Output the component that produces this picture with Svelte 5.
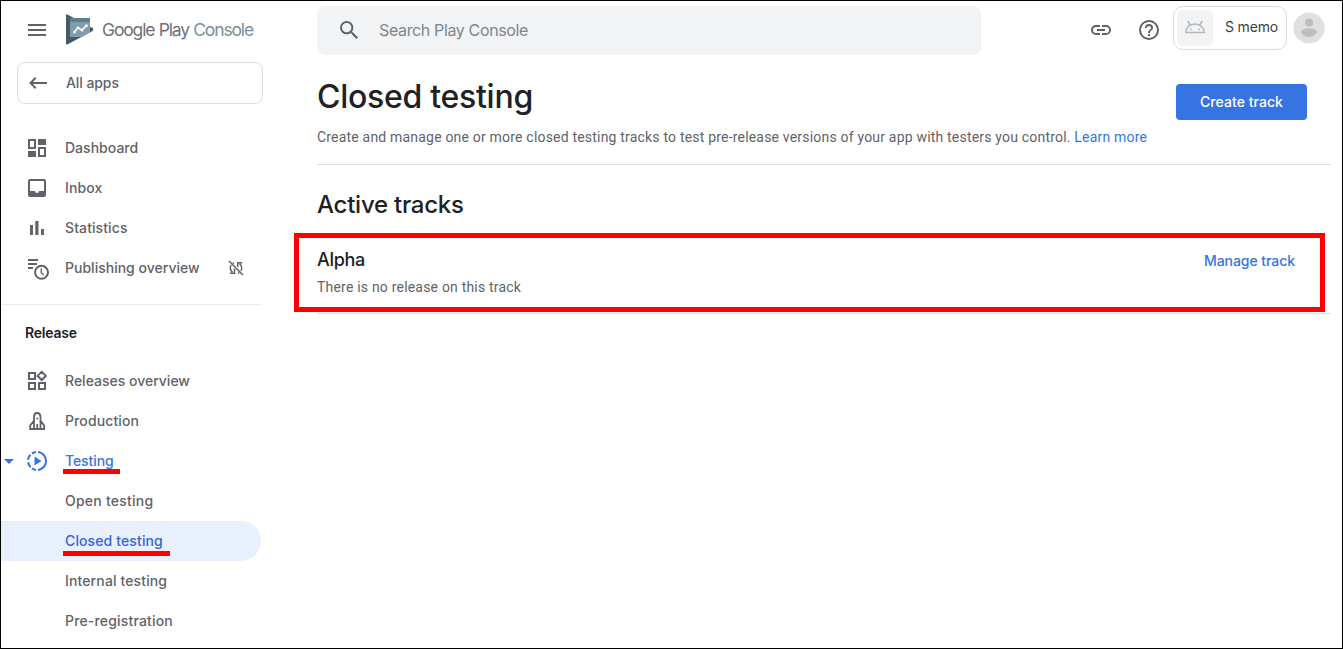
<script>
  const mainNav = [
    { label: 'Dashboard', icon: 'dashboard', ls: 0.02 },
    { label: 'Inbox', icon: 'inbox', ls: 0.12 },
    { label: 'Statistics', icon: 'stats', ls: 0.1 },
    { label: 'Publishing overview', icon: 'publish', ls: 0.01, off: true }
  ];
  const releaseNav = [
    { label: 'Releases overview', icon: 'releases', ls: 0 },
    { label: 'Production', icon: 'rocket', ls: 0.12 },
    { label: 'Testing', icon: 'testing', ls: -0.08, open: true, marked: true },
    { label: 'Open testing', ls: 0.24 },
    { label: 'Closed testing', ls: 0.12, active: true, marked: true },
    { label: 'Internal testing', ls: 0.13 },
    { label: 'Pre-registration', ls: 0.17 }
  ];
</script>

{#snippet glyph(name)}
  <svg class="glyph" viewBox="0 0 24 24" width="24" height="24" fill="none" stroke="currentColor" stroke-width="2">
    {#if name === 'dashboard'}
      <path d="M4 4h4v8H4zM14 12h6v8h-6z" stroke="none" />
      <path d="M4 4h6v8H4zM14 12h6v8h-6z" />
      <path d="M13 3h8v6h-8zM3 15h8v6H3z" fill="currentColor" stroke="none" />
    {:else if name === 'inbox'}
      <path d="M19 3H5a2 2 0 0 0-2 2v14c0 1.100.9 2 2 2h14a2 2 0 0 0 2-2V5a2 2 0 0 0-2-2zm0 12h-5c0 1.100-.9 2-2 2s-2-.9-2-2H5V5h14z" fill="currentColor" stroke="none" />
    {:else if name === 'stats'}
      <path d="M5 9h3v10H5zM10.300 5h3.200v14h-3.200zM16 13h3v6h-3z" fill="currentColor" stroke="none" />
    {:else if name === 'publish'}
      <path d="M3 4h10M3 8h9M3 12h5" stroke-width="1.800" />
      <circle cx="16.500" cy="16.300" r="6.500" />
      <path d="M16.200 12.300v4.500l2.800 2.200" stroke-width="1.300" />
    {:else if name === 'releases'}
      <path d="M4 4h6v6H4zM4 14h6v6H4zM14 14h6v6h-6zM16.700 2.800l4.100 4.100-4.100 4.100-4.100-4.100z" />
    {:else if name === 'rocket'}
      <path d="M9 20V8.500C9 5.500 10.500 4 12.200 4s3.300 1.500 3.300 4.500V20M9 11.500L5.200 16.500V20h13.900v-3.500l-3.600-5M12.200 15v5" stroke-width="1.800" />
      <circle cx="12.200" cy="9.500" r="1" fill="currentColor" stroke="none" />
    {:else if name === 'testing'}
      <path d="M13 3.050a9 9 0 0 1 0 17.900M11 3.050a9 9 0 0 0-4 1.500M5.500 5.800a9 9 0 0 0-2.400 5M3.100 13.200a9 9 0 0 0 2.400 5M7 19.450a9 9 0 0 0 4 1.500" />
      <path d="M9.500 7.500v9l7-4.500z" fill="currentColor" stroke="none" />
    {/if}
  </svg>
{/snippet}

{#snippet row(item)}
  <li class:active={item.active} class:open={item.open}>
    <span class="caret">{#if item.open}<svg width="10" height="5" viewBox="0 0 10 5"><path d="M0 0h10L5 5z" fill="currentColor" /></svg>{/if}</span>
    <span class="icon">{#if item.icon}{@render glyph(item.icon)}{/if}</span>
    <span class="label" class:marked={item.marked} style="letter-spacing:{item.ls}px">{item.label}</span>
    {#if item.off}
      <svg class="off" width="18" height="18" viewBox="0 0 18 18" fill="none" stroke="currentColor" stroke-width="1.500">
        <path d="M2 2l14 14" />
        <path d="M7 3.800L5.800 4.300M4 6c-1.300 2.500-.8 5 1.400 7.200M3 14.200h4.500V9.500M11 14.200l1.200-.5M14 12c1.300-2.500.8-5-1.400-7.200M15.200 3.800H10.700V8" />
      </svg>
    {/if}
  </li>
{/snippet}

<div class="window">
  <aside>
    <div class="brand">
      <svg class="menu" width="18" height="12" viewBox="0 0 18 12" fill="#5f6368"><path d="M0 0h18v2H0zM0 5h18v2H0zM0 10h18v2H0z" /></svg>
      <svg class="logo" width="28" height="31" viewBox="0 0 28 31">
        <path d="M0 1.500Q0-.4 1.800.7L26.500 14q1.600 1.500 0 3L1.800 30.300Q0 31 0 29.300z" fill="#455a64" />
        <path d="M4 4h20v4H4z" fill="#607d8b" />
        <path d="M4 8h20v10.300L15.500 23H4z" fill="#819cab" />
        <path d="M8.500 18l3.300-4.300 4 2.500 4.700-4.700" fill="none" stroke="#fff" stroke-width="1.500" />
        <g fill="#fff"><circle cx="8.500" cy="18" r="1.500" /><circle cx="12" cy="13.800" r="1.400" /><circle cx="16" cy="16" r="1.400" /><circle cx="20.300" cy="11.700" r="1.500" /></g>
      </svg>
      <span class="wordmark"><b>Google Play</b> <i>Console</i></span>
    </div>
    <div class="all-apps">
      <svg width="18" height="12" viewBox="0 0 18 12" fill="none" stroke="#5f6368" stroke-width="2"><path d="M18 6H1.500M6.700.8L1.500 6l5.200 5.200" /></svg>
      <span>All apps</span>
    </div>
    <ul>
      {#each mainNav as item}{@render row(item)}{/each}
    </ul>
    <h3>Release</h3>
    <ul>
      {#each releaseNav as item}{@render row(item)}{/each}
    </ul>
  </aside>

  <main>
    <header>
      <div class="search">
        <svg width="18" height="18" viewBox="3 3 17.500 17.500" fill="#5f6368"><path d="M15.500 14h-.79l-.28-.27A6.470 6.470 0 0 0 16 9.500 6.500 6.500 0 1 0 9.500 16c1.610 0 3.090-.59 4.230-1.570l.27.28v.79l5 4.990L20.490 19zm-6 0C7.010 14 5 11.990 5 9.500S7.010 5 9.500 5 14 7.010 14 9.500 11.990 14 9.500 14z" /></svg>
        <span>Search Play Console</span>
      </div>
      <svg class="link" width="24" height="24" viewBox="0 0 24 24" fill="#5f6368"><path d="M3.900 12c0-1.710 1.390-3.100 3.100-3.100h4V7H7a5 5 0 0 0 0 10h4v-1.900H7c-1.710 0-3.100-1.390-3.100-3.100zM8 13h8v-2H8zm9-6h-4v1.900h4a3.100 3.100 0 0 1 0 6.200h-4V17h4a5 5 0 0 0 0-10z" /></svg>
      <svg class="help" width="24" height="24" viewBox="0 0 24 24" fill="#5f6368"><path d="M11 18h2v-2h-2zm1-16a10 10 0 1 0 0 20 10 10 0 0 0 0-20zm0 18c-4.410 0-8-3.590-8-8s3.590-8 8-8 8 3.590 8 8-3.590 8-8 8zm0-14a4 4 0 0 0-4 4h2c0-1.100.9-2 2-2s2 .9 2 2c0 2-3 1.750-3 5h2c0-2.250 3-2.500 3-5a4 4 0 0 0-4-4z" /></svg>
      <div class="app">
        <div class="thumb">
          <svg width="22" height="14" viewBox="0 0 22 14" fill="none" stroke="#b4b6b8" stroke-width="1.500">
            <path d="M1.800 12.600a9.200 8.600 0 0 1 18.400 0zM6.200 5L3.800 1M15.800 5l2.400-4" />
            <circle cx="6.800" cy="9.300" r=".9" fill="#b4b6b8" stroke="none" /><circle cx="15.200" cy="9.300" r=".9" fill="#b4b6b8" stroke="none" />
          </svg>
        </div>
        <span>S memo</span>
      </div>
      <svg class="avatar" width="32" height="32" viewBox="0 0 32 32"><circle cx="16" cy="16" r="15.600" fill="#e0e0e0" /><circle cx="16" cy="10.500" r="4" fill="#bdbdbd" /><path d="M8 20.500c0-3 5-4.200 8-4.200s8 1.200 8 4.200c-1.600 2.700-4.500 4.500-8 4.500s-6.400-1.800-8-4.500z" fill="#bdbdbd" /></svg>
    </header>

    <section class="title">
      <div>
        <h1>Closed testing</h1>
        <p>Create and manage one or more closed testing tracks to test pre-release versions of your app with testers you control. <a href="#learn">Learn more</a></p>
      </div>
      <button>Create track</button>
    </section>

    <h2>Active tracks</h2>
    <section class="track">
      <div>
        <h4>Alpha</h4>
        <p>There is no release on this track</p>
      </div>
      <a class="manage" href="#manage">Manage track</a>
    </section>
    <hr />
  </main>
</div>

<style>
  :global(body) { margin: 0; background: #fff; }
  .window, .window * { box-sizing: border-box; }
  .window {
    width: 1343px; height: 649px; border: 1px solid #000; overflow: hidden;
    display: flex; background: #fff; color: #5f6368;
    font: 500 14px/20px Inter, "Liberation Sans", sans-serif;
  }
  h1, h2, h3, h4, p, ul { margin: 0; padding: 0; }
  svg { display: block; flex: none; }
  a { color: #3574e2; text-decoration: none; }

  aside { width: 293px; flex: none; }
  .brand { height: 61px; padding: 0 0 3px 27px; display: flex; align-items: center; }
  .logo { margin: -2px 0 0 20px; }
  .wordmark { margin: -1px 0 0 8px; font-size: 17.500px; letter-spacing: -1.140px; word-spacing: 0.5px; font-weight: 400; white-space: nowrap; color: #6f7276; }
  .wordmark b { font-weight: 400; }
  .wordmark i { font-style: normal; color: #78909c; }
  .all-apps { margin-left: 16px; width: 246px; height: 42px; border: 1px solid #dadce0; border-radius: 8px; display: flex; align-items: center; gap: 19px; padding-left: 11px; }
  .all-apps span { letter-spacing: -0.08px; }
  ul { list-style: none; }
  .all-apps + ul { padding: 24px 0 16px; border-bottom: 1px solid #e8eaed; width: 260px; }
  li { height: 40px; width: 260px; display: flex; align-items: center; }
  .caret { width: 24px; padding-left: 3px; }
  .icon { width: 40px; }
  .label { position: relative; white-space: nowrap; }
  .marked::after { content: ""; position: absolute; left: -2px; width: 57px; top: 18px; height: 5px; background: #f00; }
  .active .marked::after { top: 20px; width: 107px; }
  .off { margin: -1px 0 0 27px; }
  .open { color: #3574e2; }
  .active { background: #e8f0fe; color: #3367d6; border-radius: 0 20px 20px 0; }
  h3 { font-size: 14px; line-height: 20px; font-weight: 600; letter-spacing: -0.2px; color: #202124; padding: 18px 0 18px 24px; }

  main { flex: 1; min-width: 0; }
  header { height: 54px; padding: 5px 17px 0 23px; display: flex; align-items: flex-start; }
  .search { width: 664px; height: 49px; border-radius: 8px; background: #f1f3f4; display: flex; align-items: center; padding: 0 0 1px 23px; gap: 21px; font-size: 16px; font-weight: 400; letter-spacing: -0.36px; color: #80868b; }
  .link { margin: 12px 0 0 108px; }
  .help { margin: 12px 0 0 24px; }
  .app { margin-left: 12px; width: 114px; height: 44px; border: 1px solid #dadce0; border-radius: 10px; display: flex; align-items: center; padding-left: 3px; gap: 12px; color: #3c4043; font-weight: 400; letter-spacing: -0.15px; white-space: nowrap; }
  .app span { margin-top: -2px; }
  .thumb { width: 36px; height: 36px; border-radius: 6px; background: #f1f3f4; display: grid; place-items: center; flex: none; padding-bottom: 2px; }
  .avatar { margin: 6px 0 0 6px; }

  .title { margin-left: 23px; width: 1014px; height: 110px; border-bottom: 1px solid #dadce0; display: flex; justify-content: space-between; padding: 22px 24px 0 0; }
  h1 { font-size: 32px; line-height: 40px; font-weight: 500; letter-spacing: -0.28px; color: #202124; white-space: nowrap; }
  p { font: 400 14px/20px Roboto, sans-serif; letter-spacing: 0.194px; white-space: nowrap; }
  .title p { margin-top: 10px; }
  button { margin-top: 7px; width: 131px; height: 36px; border: 0; border-radius: 4px; background: #3574e2; color: #fff; font: 500 14px/20px Inter, sans-serif; letter-spacing: 0.05px; padding: 0; flex: none; }
  .title > div { width: 0; }
  h2 { margin: 24px 0 12px 23px; font-size: 24px; line-height: 32px; font-weight: 500; letter-spacing: -0.25px; color: #202124; }
  .track { width: 1031px; height: 79px; border: 5px solid #f00; display: flex; justify-content: space-between; padding: 10px 25px 0 18px; }
  h4 { font-size: 18px; line-height: 24px; font-weight: 500; letter-spacing: -0.3px; color: #202124; }
  .track p { margin-top: 5px; letter-spacing: 0.2px; }
  .manage { margin-top: 3px; letter-spacing: -0.06px; }
  hr { border: 0; height: 1px; width: 1014px; margin: 1px 0 0 23px; background: #dadce0; }
</style>
